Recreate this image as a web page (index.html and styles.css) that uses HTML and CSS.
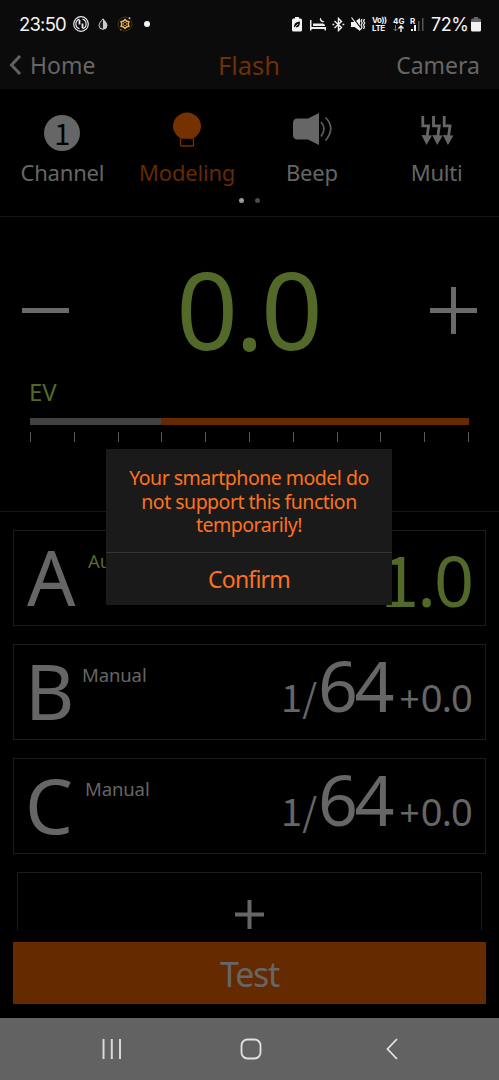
FILE: index.html
```html
<!DOCTYPE html>
<html lang="en">

<head>
    <meta charset="UTF-8">
    <meta name="viewport" content="width=device-width, initial-scale=1.0">
    <title>Flash</title>
    <link rel="stylesheet" href="styles.css">
</head>

<body>
    <div class="phone">
        <!-- status bar -->
        <div class="status">
            <div class="status-left">
                <span class="clock">23:50</span>
                <svg class="ic-call" width="16" height="16" viewBox="0 0 16 16" fill="none" stroke="#e8e8e8">
                    <circle cx="8" cy="8" r="7.3" stroke-width="1.2" />
                    <path d="M6.500 3.200a5 5 0 0 0 0 9.600M9.500 3.200a5 5 0 0 1 0 9.600" stroke-width="1.200" />
                    <path d="M6.500 4v4.500M9.500 7.500V12" stroke-width="1.800" />
                </svg>
                <svg class="ic-drop" width="10" height="12" viewBox="0 0 10 12">
                    <path d="M5 .8C7 3.4 9 5.2 9 7.3a4 4 0 0 1-8 0C1 5.2 3 3.4 5 .8z" fill="#222" stroke="#ccc" />
                    <path d="M5 .8C7 3.4 9 5.2 9 7.3a4 4 0 0 1-4 4z" fill="#ccc" />
                </svg>
                <svg class="ic-gear" width="16" height="16" viewBox="0 0 16 16" fill="none">
                    <circle cx="8" cy="8" r="7" stroke="#3c3420" />
                    <path d="M8 3.5l1.500 1.600 2.400.6-.7 2.300.7 2.300-2.400.6L8 12.500l-1.500-1.600-2.400-.6.7-2.300-.7-2.300 2.400-.6z" stroke="#f0b95a" stroke-width="1.5" />
                    <circle cx="8" cy="8" r="1.7" stroke="#b87d2c" />
                    <circle cx="12.5" cy="2.2" r=".9" fill="#ccc" />
                    <circle cx="3.7" cy="13.8" r=".8" fill="#b06c3c" />
                </svg>
                <span class="more-dot"></span>
            </div>
            <div class="status-right">
                <svg class="ic-saver" width="10" height="15" viewBox="0 0 10 15">
                    <path d="M3 0h4v1.500h1.500Q10 1.500 10 3v10q0 1.500-1.500 1.500h-7Q0 14.500 0 13V3q0-1.500 1.500-1.500H3z" fill="#f2f2f2" />
                    <path d="M2 10.500C2 6 4 5 8 4.500 8 9 6.500 11 3.200 10z" fill="#0b0b0b" />
                    <path d="M2.500 10.500L6 7" stroke="#f2f2f2" stroke-width=".8" />
                </svg>
                <svg width="16" height="14" viewBox="0 0 16 14" fill="#ececec">
                    <path d="M0 3h1.500v7H16v3.500h-1.500V12h-13v1.500H0zM3 6.500h9.500q2.500 0 2.500 2.500H3z" />
                    <path d="M11 .5a2.500 2.500 0 1 0 3.500 3.500A3 3 0 0 1 11 .5z" />
                </svg>
                <svg width="13" height="15" viewBox="0 0 13 15" fill="none" stroke="#f2f2f2" stroke-width="1.4">
                    <path d="M2.500 4l7 6.500-3 3v-12l3 3-7 6.500" />
                    <path d="M.5 7.500h1.800M10.500 7.500h1.800" stroke-width="1.7" />
                </svg>
                <svg width="15" height="15" viewBox="0 0 15 15">
                    <path d="M0 5h3.500L9 1v13L3.500 10H0z" fill="#f2f2f2" />
                    <path d="M1.500.5L10 11.500" stroke="#0b0b0b" stroke-width="1.5" />
                    <path d="M.5.5L10 13" stroke="#f2f2f2" stroke-width="1.2" />
                    <path d="M11 2l-1 2 1.200 2L10 8l1 2-1 2M13.500 2l-1 2 1.200 2-1.200 2 1 2-1 2" fill="none" stroke="#f2f2f2" stroke-width="1.2" />
                </svg>
                <span class="volte">Vo))<br>LTE</span>
                <span class="net">4G
                    <svg width="11" height="7" viewBox="0 0 11 7" fill="none">
                        <path d="M2.500 0v6M.5 4l2 2 2-2" stroke="#777" />
                        <path d="M8 7V1M5.500 3.500L8 1l2.500 2.500" stroke="#f2f2f2" stroke-width="1.4" />
                    </svg>
                </span>
                <span class="signal">
                    <span class="roam">R</span>
                    <svg width="14" height="15" viewBox="0 0 14 15">
                        <path d="M1 12h2v2H1zM4 8h2v6H4z" fill="#f2f2f2" />
                        <path d="M8 4h1.500v10H8zM12 1h1.500v13H12z" fill="#555" />
                    </svg>
                </span>
                <span class="percent">72%</span>
                <svg width="10" height="15" viewBox="0 0 10 15">
                    <path d="M3 0h4v1.500h1.500Q10 1.500 10 3v2.500H0V3q0-1.500 1.500-1.500H3z" fill="#666" />
                    <path d="M0 5h10v8q0 1.500-1.500 1.500h-7Q0 14.500 0 13z" fill="#f2f2f2" />
                </svg>
            </div>
        </div>

        <!-- title bar -->
        <div class="nav">
            <a class="back">
                <svg width="13" height="20" viewBox="0 0 13 20" fill="none" stroke="#626262" stroke-width="3">
                    <path d="M11 1L2.500 10 11 19" />
                </svg>
                Home
            </a>
            <span class="title">Flash</span>
            <a class="camera">Camera</a>
        </div>

        <!-- function tabs -->
        <div class="tabs">
            <div class="tab">
                <div class="tab-icon"><span class="channel-no">1</span></div>
                <span class="tab-name">Channel</span>
            </div>
            <div class="tab active">
                <div class="tab-icon">
                    <svg width="30" height="36" viewBox="0 0 30 36">
                        <path d="M9.500 26.500A14 13.500 0 1 1 20.500 26.500z" fill="#753100" />
                        <rect x="8.5" y="26" width="13" height="8" rx="1" fill="#000" stroke="#753100" stroke-width="1.3" />
                    </svg>
                </div>
                <span class="tab-name">Modeling</span>
            </div>
            <div class="tab">
                <div class="tab-icon">
                    <svg class="ic-beep" width="40" height="36" viewBox="0 0 40 36">
                        <path d="M5.500 6.500H16L27 1v32L16 27.500H5.500Q1 27.500 1 22.500v-11Q1 6.500 5.500 6.500z" fill="#666" />
                        <path d="M29 10q6 6.500 0 14.500M33.500 5.500q10.500 10.500 0 23" fill="none" stroke="#5c5c5c" stroke-width="1.7" />
                    </svg>
                </div>
                <span class="tab-name">Beep</span>
            </div>
            <div class="tab">
                <div class="tab-icon">
                    <svg class="ic-multi" width="34" height="32" viewBox="0 0 34 32">
                        <defs>
                            <g id="bolt">
                                <path d="M2.800 1v9.800H8.600L7.200 21" fill="none" stroke="#666" stroke-width="2.8" />
                                <path d="M1.500 20l10.500.5-5.500 9.500z" fill="#666" />
                            </g>
                        </defs>
                        <use href="#bolt" />
                        <use href="#bolt" x="10.7" />
                        <use href="#bolt" x="21.4" />
                    </svg>
                </div>
                <span class="tab-name">Multi</span>
            </div>
        </div>
        <div class="pager">
            <span class="dot on"></span>
            <span class="dot"></span>
        </div>

        <!-- exposure value -->
        <div class="ev">
            <div class="ev-row">
                <svg width="47" height="47" viewBox="0 0 47 47"><path d="M0 21h47v5H0z" fill="#6a6a6a" /></svg>
                <span class="ev-value">0.0</span>
                <svg width="47" height="47" viewBox="0 0 47 47"><path d="M0 21h21V0h5v21h21v5H26v21h-5V26H0z" fill="#6a6a6a" /></svg>
            </div>
            <div class="ev-label">EV</div>
            <div class="track"><div class="track-off"></div></div>
            <div class="ticks">
                <i></i><i></i><i></i><i></i><i></i><i></i><i></i><i></i><i></i><i></i><i></i>
            </div>
        </div>

        <!-- groups -->
        <div class="groups">
            <div class="group group-a">
                <span class="letter">A</span>
                <span class="mode">Auto</span>
                <div class="power"><span class="big"><span class="one">1</span>.0</span></div>
            </div>
            <div class="group group-b">
                <span class="letter">B</span>
                <span class="mode">Manual</span>
                <div class="power"><span class="small one">1/</span><span class="big">64</span><span class="plus">+</span><span class="small">0.0</span></div>
            </div>
            <div class="group group-c">
                <span class="letter">C</span>
                <span class="mode">Manual</span>
                <div class="power"><span class="small one">1/</span><span class="big">64</span><span class="plus">+</span><span class="small">0.0</span></div>
            </div>
            <div class="add">
                <svg width="29" height="29" viewBox="0 0 29 29"><path d="M0 12.500h12.500V0h4v12.500H29v4H16.500V29h-4V16.500H0z" fill="#666" /></svg>
            </div>
        </div>

        <div class="test">Test</div>

        <!-- system keys -->
        <div class="keys">
            <svg width="20" height="20" viewBox="0 0 20 20" stroke="#d8d8d8" stroke-width="2">
                <path d="M1.500 0v20M9.800 0v20M18 0v20" />
            </svg>
            <svg class="key-home" width="22" height="22" viewBox="0 0 22 22" fill="none" stroke="#e2e2e2" stroke-width="1.8">
                <rect x="1.500" y="1.500" width="19" height="19" rx="6" />
            </svg>
            <svg width="12" height="22" viewBox="0 0 12 22" fill="none" stroke="#e2e2e2" stroke-width="1.8">
                <path d="M11 1L1.500 11 11 21" />
            </svg>
        </div>

        <!-- dialog -->
        <div class="dialog">
            <div class="dialog-text">Your smartphone model do<br>not support this function<br>temporarily!</div>
            <div class="dialog-btn">Confirm</div>
        </div>
    </div>
</body>

</html>
```

FILE: styles.css
```css
* {
    margin: 0;
    padding: 0;
    box-sizing: border-box;
}

body {
    background: #000;
    font-family: "Noto Sans", "Open Sans", sans-serif;
    color: #666;
}

svg {
    display: block;
    flex: none;
}

.phone {
    position: relative;
    width: 499px;
    height: 1080px;
    overflow: hidden;
    display: flex;
    flex-direction: column;
}

/* status bar */
.status {
    height: 45px;
    padding: 3px 18px 0 19px;
    background: #0b0b0b;
    color: #f4f4f4;
    font-family: Inter, Roboto, sans-serif;
    display: flex;
    justify-content: space-between;
    align-items: center;
}

.status-left,
.status-right {
    display: flex;
    align-items: center;
}

.clock {
    width: 54px;
    font-size: 18.5px;
    letter-spacing: -0.8px;
}

.ic-drop {
    margin-left: 9px;
}

.ic-gear {
    margin-left: 9px;
}

.more-dot {
    width: 6px;
    height: 6px;
    margin-left: 11px;
    border-radius: 50%;
    background: #f4f4f4;
}

.status-right {
    gap: 6px;
}

.ic-saver {
    margin-right: 2px;
}

.volte,
.net {
    font-size: 8px;
    line-height: 8px;
    font-weight: 700;
}

.volte {
    width: 15px;
    letter-spacing: -0.4px;
}

.net {
    width: 12px;
}

.signal {
    display: flex;
    align-items: flex-start;
    margin-left: -1px;
}

.roam {
    width: 0;
    font-size: 8px;
    line-height: 8px;
    font-weight: 700;
}

.percent {
    width: 37px;
    margin: 0 -3px 0 1px;
    font-size: 18px;
    letter-spacing: -0.4px;
}

/* title bar */
.nav {
    height: 44px;
    padding: 0 19px 4px 9px;
    background: #0b0b0b;
    display: grid;
    grid-template-columns: 1fr auto 1fr;
    font-size: 23px;
    line-height: 40px;
}

.back {
    display: flex;
    align-items: center;
    gap: 8px;
}

.title {
    font-size: 25.5px;
    color: #6e3008;
    padding-left: 9px;
}

.camera {
    text-align: right;
}

/* tabs */
.tabs {
    height: 106px;
    padding-top: 22px;
    display: grid;
    grid-template-columns: repeat(4, 1fr);
}

.tab {
    text-align: center;
}

.tab-icon {
    height: 47px;
    padding-top: 1px;
    display: flex;
    justify-content: center;
    align-items: flex-start;
}

.channel-no {
    width: 36px;
    height: 36px;
    margin-top: 3px;
    border-radius: 50%;
    background: #666;
    color: #000;
    font: 29px/35px "Noto Sans CJK SC", sans-serif;
}

.ic-multi {
    margin-top: 3px;
}

.tab-name {
    display: block;
    height: 28px;
    font-size: 22px;
    line-height: 28px;
    letter-spacing: -0.2px;
}

.active .tab-name {
    color: #642a00;
}

.pager {
    height: 22px;
    padding-top: 3px;
    display: flex;
    justify-content: center;
    gap: 11px;
    border-bottom: 1px solid #151515;
}

.dot {
    width: 5px;
    height: 5px;
    border-radius: 50%;
    background: #4a4a4a;
}

.dot.on {
    background: #999;
}

/* exposure value */
.ev {
    height: 295px;
    padding-top: 36px;
    border-bottom: 1px solid #151515;
}

.ev-row {
    height: 114px;
    padding: 0 22px;
    display: flex;
    justify-content: space-between;
    align-items: center;
}

.ev-value {
    margin: 0 3px 2px 0;
    font-size: 108px;
    line-height: 110px;
    letter-spacing: -3px;
    color: #53692a;
}

.ev-label {
    margin: 10px 0 0 29px;
    font-size: 24px;
    line-height: 30px;
    color: #53692a;
}

.track {
    height: 7px;
    margin: 11px 30px 0;
    background: #662a00;
}

.track-off {
    width: 131px;
    height: 7px;
    background: #424242;
}

.ticks {
    margin: 7px 30px 0;
    display: flex;
    justify-content: space-between;
}

.ticks i {
    width: 1px;
    height: 10px;
    background: #585858;
}

/* groups */
.groups {
    height: 418px;
    padding: 18px 13px 0;
    overflow: hidden;
}

.group {
    height: 96px;
    margin-bottom: 18px;
    padding: 0 13px 0 11px;
    border: 1px solid #1c1c1c;
    display: flex;
}

.letter {
    width: 51px;
    font-size: 76px;
    line-height: 91px;
}

.group-a .letter {
    margin-left: 2px;
}

.mode {
    margin: 17px 0 0 6px;
    font-size: 18.5px;
    line-height: 26px;
    letter-spacing: -0.1px;
}

.group-a .mode {
    margin-left: 10px;
    color: #53692a;
}

.group-c .mode {
    margin-left: 9px;
}

.power {
    margin-left: auto;
    white-space: nowrap;
    line-height: 81px;
}

.big {
    font-size: 70px;
    letter-spacing: -2px;
}

.group-a .power {
    color: #53692a;
    line-height: 98px;
}

.group-b .big,
.group-c .big {
    margin-left: 1px;
    letter-spacing: -3.5px;
}

.small {
    font-size: 38px;
    letter-spacing: -0.8px;
}

.small.one {
    letter-spacing: 0;
}

.one {
    font-family: "Noto Sans CJK SC", sans-serif;
    line-height: 1;
}

.plus {
    margin: 0 1px 0 8px;
    font-size: 36px;
}

.add {
    height: 96px;
    margin: 0 4px;
    padding-top: 27px;
    border: 1px solid #1c1c1c;
    display: flex;
    justify-content: center;
}

.test {
    height: 62px;
    margin: 12px 13px 14px;
    background: #662a00;
    font-size: 34px;
    line-height: 64px;
    letter-spacing: -1.3px;
    text-align: center;
}

/* system keys */
.keys {
    height: 62px;
    padding: 0 101px 0 102px;
    background: #626262;
    display: flex;
    justify-content: space-between;
    align-items: center;
}

.key-home {
    margin-right: 6px;
}

/* dialog */
.dialog {
    position: absolute;
    left: 106px;
    top: 449px;
    width: 286px;
    height: 156px;
    background: #1a1a1a;
    color: #ff711c;
    text-align: center;
}

.dialog-text {
    height: 104px;
    padding-top: 17px;
    font-size: 19.5px;
    line-height: 23.5px;
    letter-spacing: -0.5px;
    white-space: nowrap;
    border-bottom: 1px solid #343434;
}

.dialog-btn {
    font-size: 23px;
    line-height: 52px;
    letter-spacing: -0.8px;
}
```
